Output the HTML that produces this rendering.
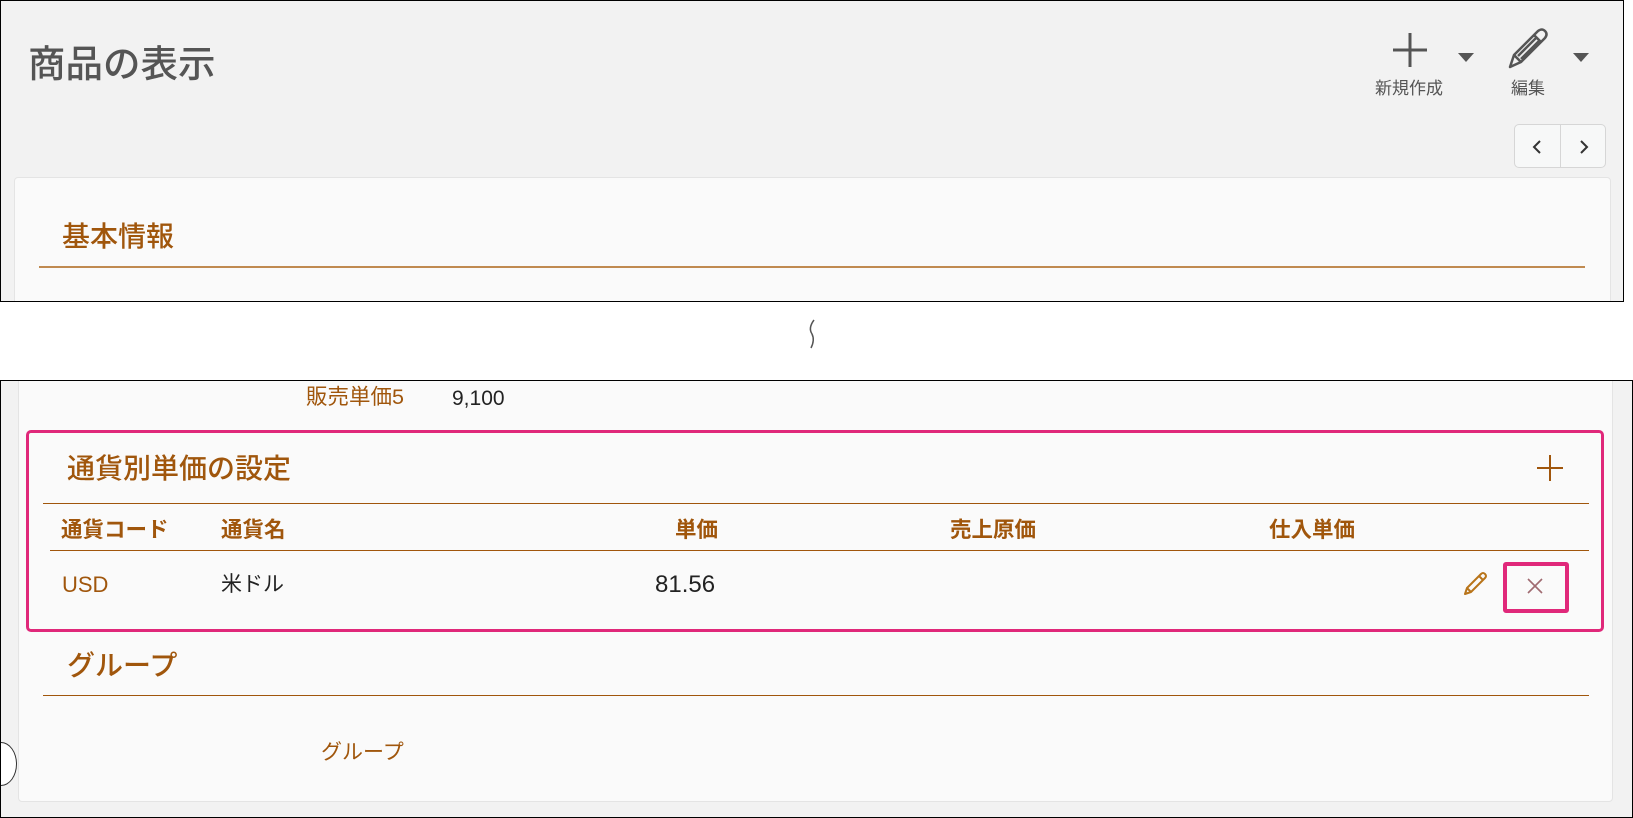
<!DOCTYPE html>
<html><head><meta charset="utf-8"><style>
*{margin:0;padding:0;box-sizing:border-box}
body{width:1633px;height:818px;background:#fff;position:relative;overflow:hidden;font-family:"Liberation Sans","Noto Sans CJK JP",sans-serif}
.a{position:absolute;white-space:nowrap;line-height:1.2}
.br{color:#a0560c}
.box1{position:absolute;left:0;top:0;width:1624px;height:302px;border:1px solid #000;background:#f2f2f2;overflow:hidden}
.box2{position:absolute;left:0;top:380px;width:1633px;height:438px;border:1px solid #000;background:#f2f2f2;overflow:hidden}
.card{position:absolute;background:#fafafa;border:1px solid #e4e4e4;border-radius:4px}
.ln{position:absolute;height:1px;background:#a0560c}
.m{font-weight:500}
</style></head><body>
<div class="box1">
  <div class="a m" style="left:27px;top:41px;font-size:37.5px;color:#555">商品の表示</div>
  <svg class="a" style="left:1390px;top:30px" width="38" height="38"><path d="M19 2V36M2 19H36" stroke="#555" stroke-width="3"/></svg>
  <svg class="a" style="left:1457px;top:52px" width="16" height="10"><path d="M0 0H16L8 9Z" fill="#555"/></svg>
  <div class="a" style="left:1374px;top:78px;font-size:17px;color:#555">新規作成</div>
  <svg class="a" style="left:1503px;top:24px" width="46" height="48" viewBox="0 0 46 48"><path d="M6 42L10 30L34 6Q38 3 41 6Q44 9 41 13L17 37Z M10 30L17 37 M6 42L17 37 M30 10L37 17 M14 31L33 12 M17 34L36 15" fill="none" stroke="#555" stroke-width="2.5" stroke-linejoin="round"/></svg>
  <svg class="a" style="left:1572px;top:52px" width="16" height="10"><path d="M0 0H16L8 9Z" fill="#555"/></svg>
  <div class="a" style="left:1510px;top:78px;font-size:17px;color:#555">編集</div>
  <div class="a" style="left:1513px;top:123px;width:92px;height:44px;border:1px solid #d6d6d6;border-radius:5px;background:#f7f8f8"></div>
  <div class="a" style="left:1559px;top:123px;width:1px;height:44px;background:#d6d6d6"></div>
  <svg class="a" style="left:1530px;top:138px" width="12" height="16"><path d="M9 2L3 8L9 14" fill="none" stroke="#333" stroke-width="2"/></svg>
  <svg class="a" style="left:1577px;top:138px" width="12" height="16"><path d="M3 2L9 8L3 14" fill="none" stroke="#333" stroke-width="2"/></svg>
  <div class="card" style="left:13px;top:176px;width:1597px;height:160px"></div>
  <div class="a br m" style="left:61px;top:219px;font-size:28px">基本情報</div>
  <div class="ln" style="left:38px;top:265px;width:1546px;height:2px;background:#c08a50"></div>
</div>
<svg class="a" style="left:805px;top:318px" width="14" height="32"><path d="M9 2Q3 10 7 16Q10 22 6 30" fill="none" stroke="#555" stroke-width="1.5"/></svg>
<div class="box2">
  <div class="card" style="left:17px;top:-10px;width:1595px;height:431px"></div>
  <div class="a br" style="left:305px;top:4px;font-size:21.5px">販売単価5</div>
  <div class="a" style="left:451px;top:5px;font-size:21px;color:#222">9,100</div>
  <div class="a" style="left:25px;top:49px;width:1578px;height:202px;border:3px solid #e0287a;border-radius:5px"></div>
  <div class="a br m" style="left:66px;top:71px;font-size:28px">通貨別単価の設定</div>
  <svg class="a" style="left:1535px;top:73px" width="28" height="28"><path d="M14 1V27M1 14H27" stroke="#a0560c" stroke-width="2"/></svg>
  <div class="ln" style="left:42px;top:122px;width:1546px"></div>
  <div class="a br" style="left:60px;top:137px;font-size:21.5px;font-weight:bold">通貨コード</div>
  <div class="a br" style="left:220px;top:137px;font-size:21.5px;font-weight:bold">通貨名</div>
  <div class="a br" style="left:674px;top:137px;font-size:21.5px;font-weight:bold">単価</div>
  <div class="a br" style="left:949px;top:137px;font-size:21.5px;font-weight:bold">売上原価</div>
  <div class="a br" style="left:1268px;top:137px;font-size:21.5px;font-weight:bold">仕入単価</div>
  <div class="ln" style="left:49px;top:169px;width:1539px"></div>
  <div class="a br" style="left:61px;top:191px;font-size:22px">USD</div>
  <div class="a" style="left:220px;top:191px;font-size:21px;color:#222">米ドル</div>
  <div class="a" style="left:654px;top:190px;font-size:24px;color:#222">81.56</div>
  <svg class="a" style="left:1461px;top:190px" width="26" height="26" viewBox="0 0 26 26"><path d="M3 23L5 17L19 3Q21 1 23 3Q25 5 23 7L9 21Z M5 17L9 21 M3 23L9 21 M17 5L21 9" fill="none" stroke="#b8741a" stroke-width="2" stroke-linejoin="round"/></svg>
  <div class="a" style="left:1502px;top:181px;width:66px;height:51px;border:4px solid #e0287a;border-radius:3px"></div>
  <svg class="a" style="left:1525px;top:196px" width="18" height="18"><path d="M2 2L16 16M16 2L2 16" stroke="#a06a70" stroke-width="1.6"/></svg>
  <div class="a br m" style="left:66px;top:268px;font-size:28px">グループ</div>
  <div class="ln" style="left:42px;top:314px;width:1546px"></div>
  <div class="a br" style="left:320px;top:359px;font-size:21px">グループ</div>
  <div class="a" style="left:-16px;top:361px;width:32px;height:44px;border:1px solid #333;border-radius:50%;background:#fff"></div>
</div>
</body></html>
